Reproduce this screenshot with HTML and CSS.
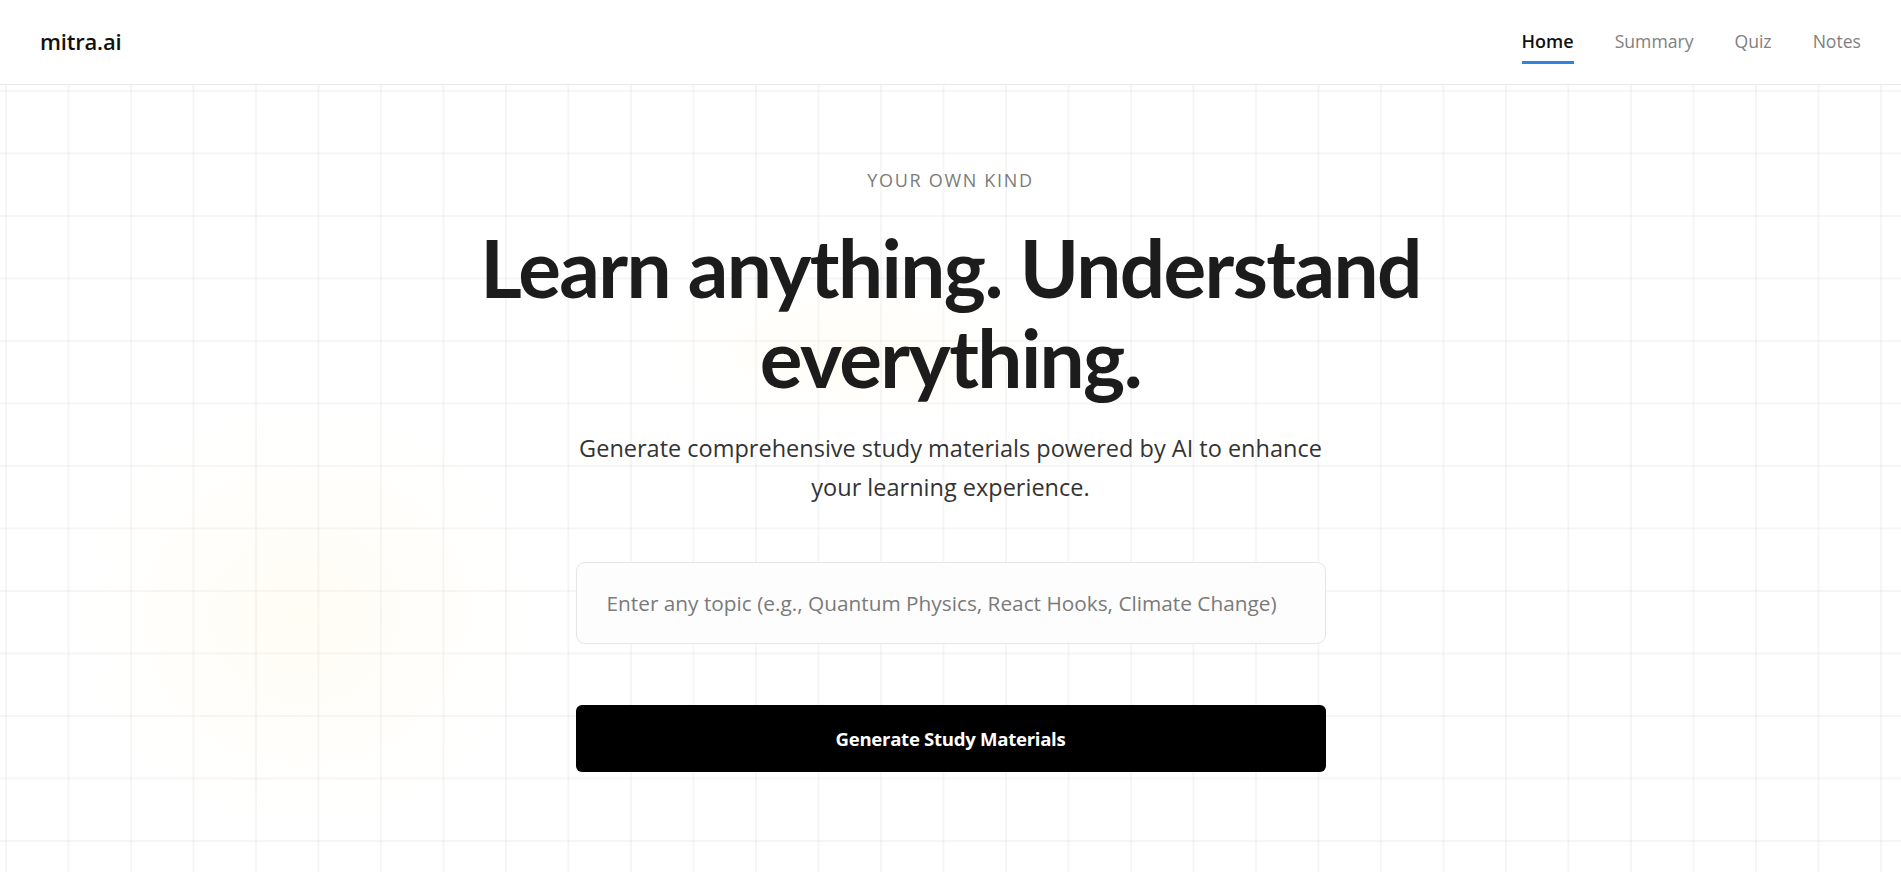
FILE: index.html
```html
<!DOCTYPE html>
<html lang="en">
<head>
<meta charset="utf-8">
<title>mitra.ai</title>
<link rel="stylesheet" href="styles.css">
</head>
<body>
<div class="page">
  <header class="topbar">
    <div class="logo">mitra.ai</div>
    <nav class="nav">
      <a class="nav-link active" href="#">Home</a>
      <a class="nav-link" href="#">Summary</a>
      <a class="nav-link" href="#">Quiz</a>
      <a class="nav-link" href="#">Notes</a>
    </nav>
  </header>
  <main class="hero">
    <div class="glow glow-a"></div>
    <div class="glow glow-b"></div>
    <div class="hero-inner">
      <p class="eyebrow">YOUR OWN KIND</p>
      <h1 class="title">Learn anything. Understand<br>everything.</h1>
      <p class="lead">Generate comprehensive study materials powered by AI to enhance<br>your learning experience.</p>
      <form class="form">
        <input class="topic" type="text" placeholder="Enter any topic (e.g., Quantum Physics, React Hooks, Climate Change)">
        <button class="submit" type="button">Generate Study Materials</button>
      </form>
    </div>
  </main>
</div>
</body>
</html>
```

FILE: styles.css
```css
* { box-sizing: border-box; }
html, body { margin: 0; padding: 0; }
body {
  font-family: "Open Sans", "Noto Sans", "Liberation Sans", sans-serif;
  color: #1b1b1b;
  background-color: #ffffff;
  background-image:
    linear-gradient(to right, rgba(0,0,0,0.036) 2px, transparent 2px),
    linear-gradient(to bottom, rgba(0,0,0,0.036) 2px, transparent 2px);
  background-size: 62.5px 62.5px;
  background-position: 5px 27.5px;
  min-height: 100vh;
  overflow: hidden;
}
.page { min-height: 100vh; display: flex; flex-direction: column; }
.topbar {
  height: 85px;
  background: #ffffff;
  border-bottom: 1px solid #e8e8e8;
  display: flex;
  align-items: center;
  justify-content: space-between;
  padding: 0 40px 0 40px;
  position: relative;
  z-index: 2;
}
.logo { font-size: 22px; font-weight: 600; color: #111; letter-spacing: -0.2px; margin-top: -2px; }
.nav { display: flex; gap: 41px; height: 100%; align-items: center; }
.nav-link {
  font-size: 17.6px;
  color: #808080;
  text-decoration: none;
  position: relative;
  padding: 8px 0;
  margin-top: -2px;
}
.nav-link.active { color: #111; font-weight: 600; font-size: 18px; }
.nav-link.active::after {
  content: "";
  position: absolute;
  left: 0; right: 0; bottom: -3px;
  height: 3px;
  background: #2d84e0;
}
.hero { flex: 1; position: relative; }
.glow { position: absolute; border-radius: 50%; pointer-events: none; }
.glow-a {
  left: 80px; top: 320px; width: 450px; height: 420px;
  background: radial-gradient(closest-side, rgba(255,236,170,0.13), rgba(255,236,170,0));
}
.glow-b {
  left: 660px; top: 190px; width: 380px; height: 150px;
  background: radial-gradient(closest-side, rgba(255,240,180,0.12), rgba(255,240,180,0));
}
.hero-inner {
  position: relative;
  display: flex;
  flex-direction: column;
  align-items: center;
  padding-top: 83px;
}
.eyebrow {
  margin: 0;
  font-size: 18px;
  letter-spacing: 1.7px;
  color: #7b7b7b;
  line-height: 24px;
}
.title {
  margin: 30px 0 0 0;
  font-family: Lato, "Open Sans", sans-serif;
  font-size: 80px;
  font-weight: 700;
  line-height: 90px;
  letter-spacing: -1.6px;
  text-align: center;
  color: #1c1c1c;
}
.lead {
  margin: 27px 0 0 0;
  font-size: 23.5px;
  line-height: 39px;
  color: #333;
  text-align: center;
  letter-spacing: 0;
}
.form { width: 750px; display: flex; flex-direction: column; gap: 61px; margin-top: 55px; }
.topic {
  height: 82px;
  width: 100%;
  border: 1px solid #e6e6e6;
  border-radius: 9px;
  background: #fdfdfd;
  padding: 0 30px;
  font-family: inherit;
  font-size: 20.8px;
  color: #333;
  outline: none;
  letter-spacing: 0;
}
.topic::placeholder { color: #7a7a7a; }
.submit {
  height: 67px;
  width: 100%;
  border: none;
  border-radius: 6px;
  background: #000;
  color: #fff;
  font-family: inherit;
  font-weight: 700;
  font-size: 18.6px;
  letter-spacing: -0.3px;
  cursor: pointer;
}
```
